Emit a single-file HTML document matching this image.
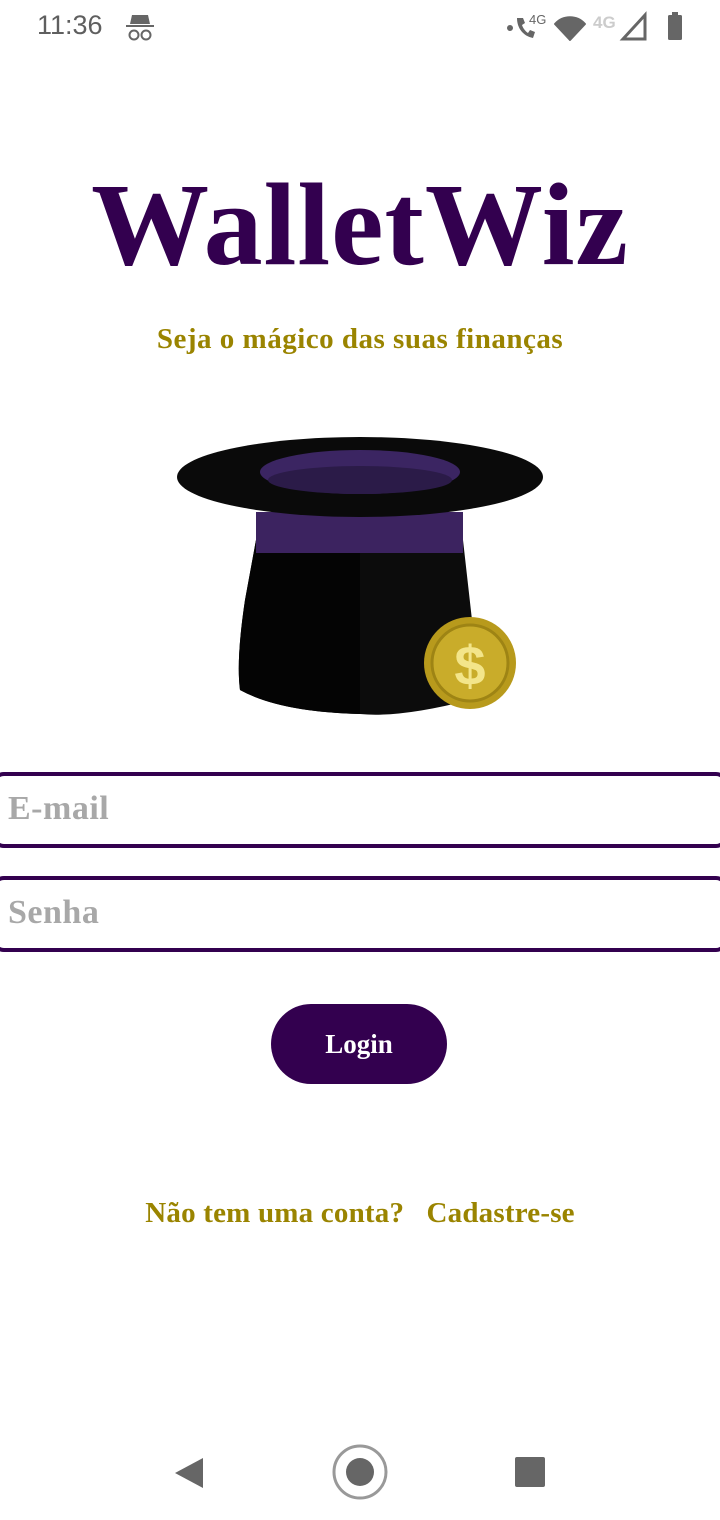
<!DOCTYPE html>
<html><head><meta charset="utf-8"><style>
html,body{margin:0;padding:0;width:720px;height:1520px;background:#fff;overflow:hidden;position:relative;font-family:"Liberation Serif",serif;}
.abs{position:absolute}
.title{left:0;width:720px;top:160px;text-align:center;font-size:118px;font-weight:bold;color:#33004f;letter-spacing:1px;line-height:130px}
.sub{left:0;width:720px;top:323px;text-align:center;font-size:29px;color:#9a8400;font-weight:bold;letter-spacing:0.5px}
.inp{left:-8px;width:728px;height:68px;border:4px solid #33004f;border-radius:12px;box-sizing:content-box}
.ph{position:absolute;left:12px;top:14px;font-size:34px;color:#a8a8a8;font-weight:bold;letter-spacing:0.5px}
.btn{left:271px;top:1004px;width:176px;height:80px;border-radius:40px;background:#33004f;color:#fff;font-size:27px;font-weight:bold;text-align:center;line-height:80px}
.link{left:0;width:720px;top:1197px;text-align:center;font-size:29px;color:#9a8400;font-weight:bold;letter-spacing:0.2px}
.sb{font-family:"Liberation Sans",sans-serif;color:#5f5f5f}
</style></head><body>
<div class="abs sb" style="left:37px;top:10px;font-size:27px">11:36</div>
<svg class="abs" style="left:124px;top:13px" width="32" height="30" viewBox="0 0 32 30"><path d="M8 2h16l2 9H6z" fill="#666"/><rect x="2" y="12" width="28" height="2" fill="#666"/><circle cx="10" cy="22" r="4.5" fill="none" stroke="#666" stroke-width="2"/><circle cx="22" cy="22" r="4.5" fill="none" stroke="#666" stroke-width="2"/></svg>
<svg class="abs" style="left:505px;top:10px" width="185" height="34" viewBox="0 0 185 34">
<circle cx="5" cy="18" r="3" fill="#666"/>
<path d="M12 8c0 10 6 18 16 20l2-6-5-2-2 3c-3-2-5-5-6-8l3-2-2-5z" fill="#666"/>
<text x="24" y="14" font-family="Liberation Sans" font-size="13" fill="#666">4G</text>
<path d="M50 14a20 20 0 0 1 30 0l-15 16z" fill="#666" stroke="#666" stroke-width="2" stroke-linejoin="round"/>
<text x="88" y="18" font-family="Liberation Sans" font-size="17" fill="#ccc" font-weight="bold">4G</text>
<path d="M140 5v24h-22z" fill="none" stroke="#666" stroke-width="3"/>
<rect x="163" y="5" width="14" height="25" rx="1.5" fill="#666"/><rect x="167" y="2" width="6" height="4" fill="#666"/>
</svg>
<div class="abs title">WalletWiz</div>
<div class="abs sub">Seja o mágico das suas finanças</div>
<svg class="abs" style="left:160px;top:420px" width="400" height="310" viewBox="160 420 400 310">
<path d="M256 540 L463 540 L472 620 Q480 690 470 700 Q400 718 360 714 Q280 712 240 690 Q236 660 245 600 Z" fill="#0c0c0c"/>
<path d="M360 540 L360 714 Q280 712 240 690 Q236 660 245 600 L256 540Z" fill="#040404"/>
<rect x="256" y="512" width="207" height="41" fill="#3c2360"/>
<ellipse cx="360" cy="477" rx="183" ry="40" fill="#0a0a0a"/>
<ellipse cx="360" cy="472" rx="100" ry="22" fill="#3b2562"/>
<ellipse cx="360" cy="480" rx="92" ry="14" fill="#2b1b48"/>
<circle cx="470" cy="663" r="46" fill="#b89a1c"/>
<circle cx="470" cy="663" r="38" fill="#c9ac2a" stroke="#9e8414" stroke-width="3"/>
<text x="470" y="685" text-anchor="middle" font-family="Liberation Sans" font-weight="bold" font-size="56" fill="#f3e58a">$</text>
</svg>
<div class="abs inp" style="top:772px"><div class="ph">E-mail</div></div>
<div class="abs inp" style="top:876px"><div class="ph">Senha</div></div>
<div class="abs btn">Login</div>
<div class="abs link">Não tem uma conta?&nbsp;&nbsp; Cadastre-se</div>
<svg class="abs" style="left:0;top:1430px" width="720" height="90">
<path d="M203 28v30l-28-15z" fill="#666"/>
<circle cx="360" cy="42" r="26" fill="none" stroke="#999" stroke-width="3"/>
<circle cx="360" cy="42" r="14" fill="#666"/>
<rect x="515" y="27" width="30" height="30" rx="2" fill="#666"/>
</svg>
</body></html>
